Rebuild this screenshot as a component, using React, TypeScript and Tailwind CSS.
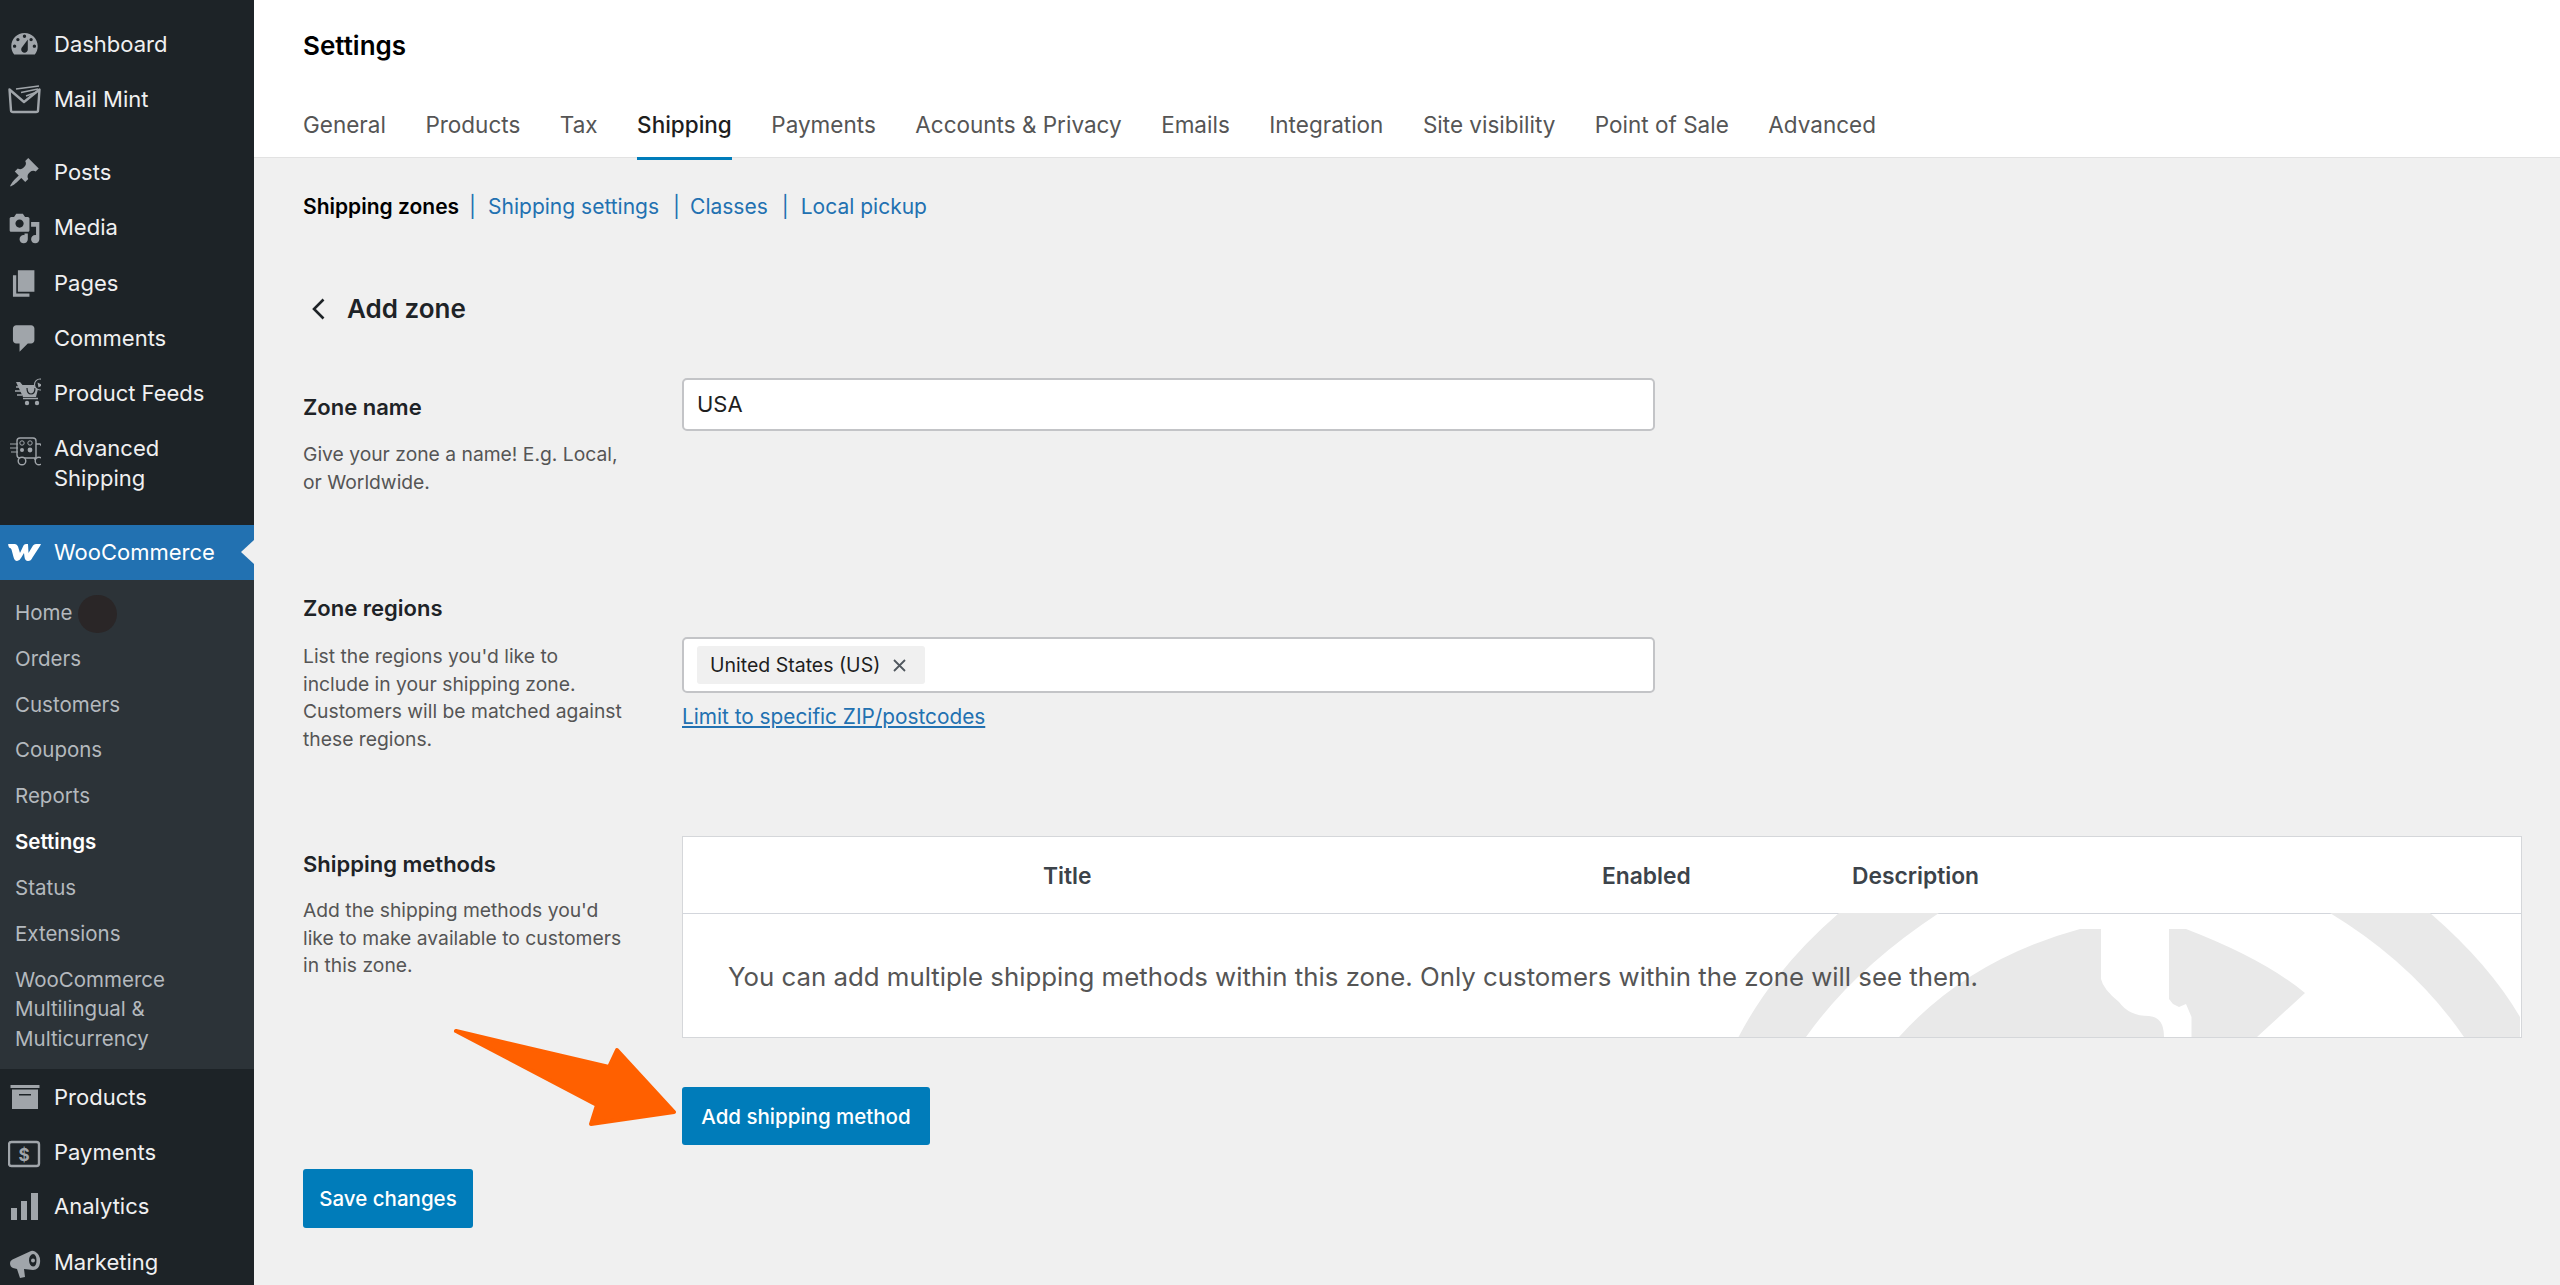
import type { ReactNode } from "react";

const DashIcon = ({ d }: { d: string }) => (
  <svg viewBox="0 0 20 20" className="w-[33px] h-[33px] shrink-0" fill="#a0a5aa" fillRule="evenodd">
    <path d={d} />
  </svg>
);

const Box = ({ children }: { children: ReactNode }) => (
  <svg viewBox="0 0 33 33" className="w-[33px] h-[33px] shrink-0" fill="none">
    {children}
  </svg>
);

const MailMintIcon = () => (
  <Box>
    <path d="M1.500 6.500 16 19 31.500 6.500 30 27.500Q30 29 28 29H5Q3 29 3 27.500Z" stroke="#a0a5aa" strokeWidth="2.400" strokeLinejoin="round" />
    <path d="M8 6 31 3M13 9.500 30 6M18 13 29 9" stroke="#a0a5aa" strokeWidth="1.500" />
  </Box>
);

const FeedsIcon = () => (
  <Box>
    <path d="M8 4h4l2.500 3H31l-3 12H15Z" fill="#a0a5aa" />
    <path d="M19 10q0 6 4 6t4-6" stroke="#1d2327" strokeWidth="1.200" />
    <circle cx="19" cy="25" r="2.200" fill="#a0a5aa" />
    <circle cx="29" cy="25" r="2.200" fill="#a0a5aa" />
    <path d="M15 20.500h15" stroke="#a0a5aa" strokeWidth="1.500" />
    <path d="M8 9h5M7 13h6M9 17h5" stroke="#a0a5aa" strokeWidth="1.400" />
    <circle cx="32" cy="6.500" r="5.500" fill="#1d2327" stroke="#a0a5aa" strokeWidth="1.200" />
    <path d="m29.500 4.500 5 2.500-4 2.500z" fill="#a0a5aa" />
  </Box>
);

const ShippingIcon = () => (
  <Box>
    <path d="M12 3h13q3 0 3 3v17H12Q9 23 9 20V6q0-3 3-3Z" stroke="#a0a5aa" strokeWidth="1.400" />
    <path d="M28 9h4l7 8v6q0 1-1 1h-3M28 24h-2" stroke="#a0a5aa" strokeWidth="1.400" />
    <circle cx="14" cy="8" r="2.200" stroke="#a0a5aa" />
    <circle cx="22" cy="8" r="2.200" stroke="#a0a5aa" />
    <circle cx="14" cy="15" r="2" fill="#a0a5aa" />
    <circle cx="22" cy="15" r="2.400" fill="#a0a5aa" />
    <circle cx="14" cy="26" r="3.800" fill="#1d2327" stroke="#a0a5aa" strokeWidth="1.400" />
    <circle cx="31" cy="26" r="3.800" fill="#1d2327" stroke="#a0a5aa" strokeWidth="1.400" />
    <path d="M2 9h8M2 13h8M3 17h7" stroke="#a0a5aa" strokeWidth="1.200" />
  </Box>
);

const WooIcon = () => (
  <Box>
    <path
      d="M0 8.500Q0 8 1 8H7Q9 8 10 10.500L12 17 15.500 9.500Q16 8 18 8H20L20.500 17 25 9.500Q26 8 28 8H33L32 10 24.500 21.500Q23 25 20 25 17 25 16.500 21L16 17 13 22Q11.500 25 9 25 6.500 25 5.500 21L3.500 13.500Q3 12 1 11.500Z"
      fill="#ffffff"
    />
  </Box>
);

const ProductsIcon = () => (
  <Box>
    <path d="M2.500 3h29v3h-29Z" fill="#a0a5aa" />
    <path fillRule="evenodd" d="M4 7.500h26V27H4ZM11 12v1.500h12V12Z" fill="#a0a5aa" />
  </Box>
);

const PaymentsIcon = () => (
  <Box>
    <rect x="1" y="5" width="30" height="24" rx="2.500" stroke="#a0a5aa" strokeWidth="2.400" />
    <text x="16" y="23.500" textAnchor="middle" fontSize="17" fontWeight="700" fill="#a0a5aa" fontFamily="Inter, sans-serif">
      $
    </text>
  </Box>
);

const AnalyticsIcon = () => (
  <Box>
    <path d="M3 17h6v12H3ZM13 10h6v19h-6ZM23 2h7v27h-7Z" fill="#a0a5aa" />
  </Box>
);

const MarketingIcon = () => (
  <Box>
    <path fillRule="evenodd" d="M2 17Q2 14.500 4.500 13.500L23 5Q25 4.500 27 5.500 33 9 32 17 31 24 25 24L16 23 17 31 12 32 9 23 5 22Q2 21 2 17ZM25 8Q21 9 21 14.500 21.500 20 25 20.500 28.500 20.500 28.500 14.500 28.500 8.500 25 8Z" fill="#a0a5aa" />
    <circle cx="25" cy="14.500" r="2" fill="#a0a5aa" />
  </Box>
);

const NavItem = ({ icon, label, className }: { icon: ReactNode; label: ReactNode; className: string }) => (
  <a className={`flex items-center gap-[13px] pl-2 text-[22px] text-[#f0f0f1] ${className}`}>
    {icon}
    <span className="leading-[30px] -mt-[2px]">{label}</span>
  </a>
);

const subItems = ["Orders", "Customers", "Coupons", "Reports"];

const Sidebar = () => (
  <aside className="w-[254px] shrink-0 h-full bg-[#1d2327] overflow-hidden">
    <div className="pt-[17px]">
      <NavItem className="h-[55px]" label="Dashboard" icon={<DashIcon d="M3.760 16h12.480c1.100-1.370 1.760-3.110 1.760-5 0-4.420-3.580-8-8-8s-8 3.580-8 8c0 1.890.66 3.630 1.760 5zM10 4c.55 0 1 .45 1 1s-.45 1-1 1-1-.45-1-1 .45-1 1-1zM6 6c.55 0 1 .45 1 1s-.45 1-1 1-1-.45-1-1 .45-1 1-1zm8 0c.55 0 1 .45 1 1s-.45 1-1 1-1-.45-1-1 .45-1 1-1zm-5.370 5.550L12 7v6c0 1.100-.9 2-2 2s-2-.9-2-2c0-.57.24-1.080.63-1.450zM4 10c.55 0 1 .45 1 1s-.45 1-1 1-1-.45-1-1 .45-1 1-1zm12 0c.55 0 1 .45 1 1s-.45 1-1 1-1-.45-1-1 .45-1 1-1z" />} />
      <NavItem className="h-[55px]" label="Mail Mint" icon={<MailMintIcon />} />
    </div>
    <div className="mt-[18px]">
      <NavItem className="h-[55px]" label="Posts" icon={<DashIcon d="M10.440 3.020l1.820-1.820 6.360 6.350-1.830 1.820c-1.050-.68-2.480-.57-3.410.36l-.75.75c-.92.93-1.040 2.350-.35 3.410l-1.830 1.820-2.410-2.410-2.800 2.790c-.42.42-3.380 2.710-3.800 2.290s1.860-3.390 2.280-3.810l2.790-2.790L4.100 9.360l1.830-1.820c1.050.69 2.480.57 3.400-.36l.75-.75c.93-.92 1.050-2.350.36-3.410z" />} />
      <NavItem className="h-[56px]" label="Media" icon={<DashIcon d="M13 11V4c0-.55-.45-1-1-1h-1.670L9 1H5L3.670 3H2c-.55 0-1 .45-1 1v7c0 .55.45 1 1 1h10c.55 0 1-.45 1-1zM7 4.500c1.380 0 2.500 1.120 2.500 2.500S8.380 9.500 7 9.500 4.500 8.380 4.500 7 5.620 4.500 7 4.500zM14 6h5v10.500c0 1.380-1.120 2.500-2.500 2.500S14 17.880 14 16.500s1.120-2.500 2.500-2.500c.17 0 .34.02.5.05V9h-3V6zm-4 8.050V13h2v3.500c0 1.380-1.120 2.500-2.500 2.500S7 17.880 7 16.500 8.120 14 9.500 14c.17 0 .34.02.5.05z" />} />
      <NavItem className="h-[55px]" label="Pages" icon={<DashIcon d="M6 15V2h10v13H6zm-1 1h8v2H3V5h2v11z" />} />
      <NavItem className="h-[55px]" label="Comments" icon={<DashIcon d="M5 2h9c1.100 0 2 .9 2 2v7c0 1.100-.9 2-2 2h-2l-5 5v-5H5c-1.100 0-2-.9-2-2V4c0-1.100.9-2 2-2z" />} />
      <NavItem className="h-[56px]" label="Product Feeds" icon={<FeedsIcon />} />
      <a className="flex gap-[13px] pl-2 pt-[13px] h-[85px] text-[22px] text-[#f0f0f1]">
        <ShippingIcon />
        <span className="leading-[30px] -mt-[2px]">
          Advanced
          <br />
          Shipping
        </span>
      </a>
    </div>
    <div className="relative mt-[18px] bg-[#2271b1]">
      <NavItem className="h-[55px] text-white" label="WooCommerce" icon={<WooIcon />} />
      <div className="absolute right-0 top-[15px] border-y-[12px] border-r-[13px] border-y-transparent border-r-[#f0f0f0]" />
    </div>
    <div className="bg-[#2c3338] h-[489px] pt-[10.500px] pl-[15px] text-[20.500px] text-[#b4b9be]">
      <div className="relative h-[45.800px] flex items-center">
        Home
        <div className="absolute left-[63px] top-[4px] w-[39px] h-[38px] rounded-full bg-[#2a2627]" />
      </div>
      {subItems.map((s) => (
        <div key={s} className="h-[45.800px] flex items-center">
          {s}
        </div>
      ))}
      <div className="h-[45.800px] flex items-center font-semibold text-white">Settings</div>
      <div className="h-[45.800px] flex items-center">Status</div>
      <div className="h-[45.800px] flex items-center">Extensions</div>
      <div className="leading-[29.500px] pt-[8px]">
        WooCommerce
        <br />
        Multilingual &amp;
        <br />
        Multicurrency
      </div>
    </div>
    <NavItem className="h-[58px]" label="Products" icon={<ProductsIcon />} />
    <NavItem className="h-[52px]" label="Payments" icon={<PaymentsIcon />} />
    <NavItem className="h-[56px]" label="Analytics" icon={<AnalyticsIcon />} />
    <NavItem className="h-[55px]" label="Marketing" icon={<MarketingIcon />} />
  </aside>
);

const tabs = ["General", "Products", "Tax", "Shipping", "Payments", "Accounts & Privacy", "Emails", "Integration", "Site visibility", "Point of Sale", "Advanced"];

const Header = () => (
  <header className="h-[158px] bg-white border-b border-[#e2e2e2] pl-[49px] pt-[31px]">
    <h1 className="text-[26px] leading-[30px] font-semibold text-black">Settings</h1>
    <nav className="flex gap-[39.500px] mt-[49px] text-[22.500px] leading-[30px] text-[#555]">
      {tabs.map((t) =>
        t === "Shipping" ? (
          <a key={t} className="relative pb-[17px] font-medium text-[#1e1e1e] border-b-[3px] border-[#007cba]">
            {t}
          </a>
        ) : (
          <a key={t} className="pb-[20px]">
            {t}
          </a>
        ),
      )}
    </nav>
  </header>
);

const Watermark = () => (
  <svg viewBox="1700 914 822 124" className="absolute right-0 bottom-0 w-[822px] h-[124px]" fill="#e9e9e9">
    <path d="M1739.500 1038Q1775 970 1840 914H1940Q1855 970 1807 1038Z" />
    <path d="M2331 914H2431Q2490 965 2521 1018V1038H2465Q2415 965 2331 914Z" />
    <path d="M1900 1038Q1970 960 2081 930H2102V980Q2104 990 2120 1003 2130 1017 2150 1017 2165 1018 2165 1038Z" />
    <path d="M2170 930H2187Q2265 960 2306 994L2258 1038H2192.500V1018L2187 1005 2180 1008 2174 1005 2170 1000Z" />
  </svg>
);

const Arrow = () => (
  <svg viewBox="450 1025 230 105" className="absolute left-[450px] top-[1025px] w-[230px] h-[105px]" fill="#ff6000" stroke="#ff6000" strokeWidth="4" strokeLinejoin="round">
    <path d="M456 1031 609 1067 617 1050 674 1112 591 1124 597 1105Z" />
  </svg>
);

const Label = ({ children }: { children: ReactNode }) => (
  <h2 className="text-[22px] leading-[30px] font-semibold text-[#1e2327]">{children}</h2>
);

const Desc = ({ children, className }: { children: ReactNode; className: string }) => (
  <p className={`text-[19.300px] leading-[27.500px] text-[#555] ${className}`}>{children}</p>
);

const Form = () => (
  <main className="pl-[49px] pr-[38px] pt-[34px]">
    <div className="flex text-[21px] leading-[30px] text-[#2271b1]">
      <span className="font-semibold text-black">Shipping zones</span>
      <span className="ml-[10px]">|</span>
      <a className="ml-[12px]">Shipping settings</a>
      <span className="ml-[14px]">|</span>
      <a className="ml-[10px]">Classes</a>
      <span className="ml-[14px]">|</span>
      <a className="ml-[12px]">Local pickup</a>
    </div>
    <div className="flex items-center mt-[69px] ml-[9px] gap-[22px]">
      <svg viewBox="0 0 13 22" className="w-[13px] h-[22px]" fill="none" stroke="#1e2327" strokeWidth="2.600">
        <path d="M11.500 1.500 2 11l9.500 9.500" />
      </svg>
      <h2 className="text-[26px] leading-[36px] font-semibold text-[#1e2327]">Add zone</h2>
    </div>

    <section className="grid grid-cols-[379px_1fr] mt-[51px] h-[215px]">
      <div className="pt-[14px]">
        <Label>Zone name</Label>
        <Desc className="mt-[19px]">
          Give your zone a name! E.g. Local,
          <br />
          or Worldwide.
        </Desc>
      </div>
      <div>
        <div className="w-[973px] h-[53px] bg-white border-2 border-[#c3c4c7] rounded-[5px] pl-[13px] flex items-center text-[22px] text-[#1e1e1e]">USA</div>
      </div>
    </section>

    <section className="grid grid-cols-[379px_1fr] h-[243px]">
      <div>
        <Label>Zone regions</Label>
        <Desc className="mt-[20px]">
          List the regions you'd like to
          <br />
          include in your shipping zone.
          <br />
          Customers will be matched against
          <br />
          these regions.
        </Desc>
      </div>
      <div className="pt-[44px]">
        <div className="w-[973px] h-[56px] bg-white border-2 border-[#c3c4c7] rounded-[5px] pl-[13px] flex items-center">
          <div className="h-[38px] w-[228px] rounded-[3px] bg-[#f0f0f0] pl-[13px] pt-[1px] flex items-center gap-[13px] text-[19.500px] text-[#1e1e1e]">
            United States (US)
            <svg viewBox="0 0 13 13" className="w-[13px] h-[13px]" fill="none" stroke="#50575e" strokeWidth="1.800">
              <path d="m1 1 11 11M12 1 1 12" />
            </svg>
          </div>
        </div>
        <a className="block mt-[10px] text-[20.800px] leading-[28px] text-[#2271b1] underline">Limit to specific ZIP/postcodes</a>
      </div>
    </section>

    <section className="grid grid-cols-[379px_1fr]">
      <div className="pt-[13px]">
        <Label>Shipping methods</Label>
        <Desc className="mt-[18px]">
          Add the shipping methods you'd
          <br />
          like to make available to customers
          <br />
          in this zone.
        </Desc>
      </div>
      <div>
        <div className="bg-white border border-[#d5d7da] h-[202px] flex flex-col">
          <div className="h-[77px] shrink-0 flex items-center pl-[360px] pt-[2px] border-b border-[#d3d6dc] text-[22.800px] font-semibold text-[#3c434a]">
            <span className="w-[559px]">Title</span>
            <span className="w-[250px]">Enabled</span>
            <span>Description</span>
          </div>
          <div className="relative flex-1 pl-[45px] pt-[46px]">
            <Watermark />
            <p className="relative text-[25.800px] leading-[34px] text-[#555] whitespace-nowrap">You can add multiple shipping methods within this zone. Only customers within the zone will see them.</p>
          </div>
        </div>
        <button className="mt-[49px] h-[58px] w-[248px] pt-[2px] rounded-[3px] bg-[#007cba] text-white text-[20.500px] font-medium">Add shipping method</button>
      </div>
    </section>

    <button className="mt-[24px] h-[59px] w-[170px] pt-[2px] rounded-[3px] bg-[#007cba] text-white text-[20.500px] font-medium">Save changes</button>
  </main>
);

export default function App() {
  return (
    <div className="relative flex h-[1285px] overflow-hidden bg-[#f0f0f0] font-['Inter',sans-serif]">
      <Sidebar />
      <div className="flex-1 min-w-0">
        <Header />
        <Form />
      </div>
      <Arrow />
    </div>
  );
}
